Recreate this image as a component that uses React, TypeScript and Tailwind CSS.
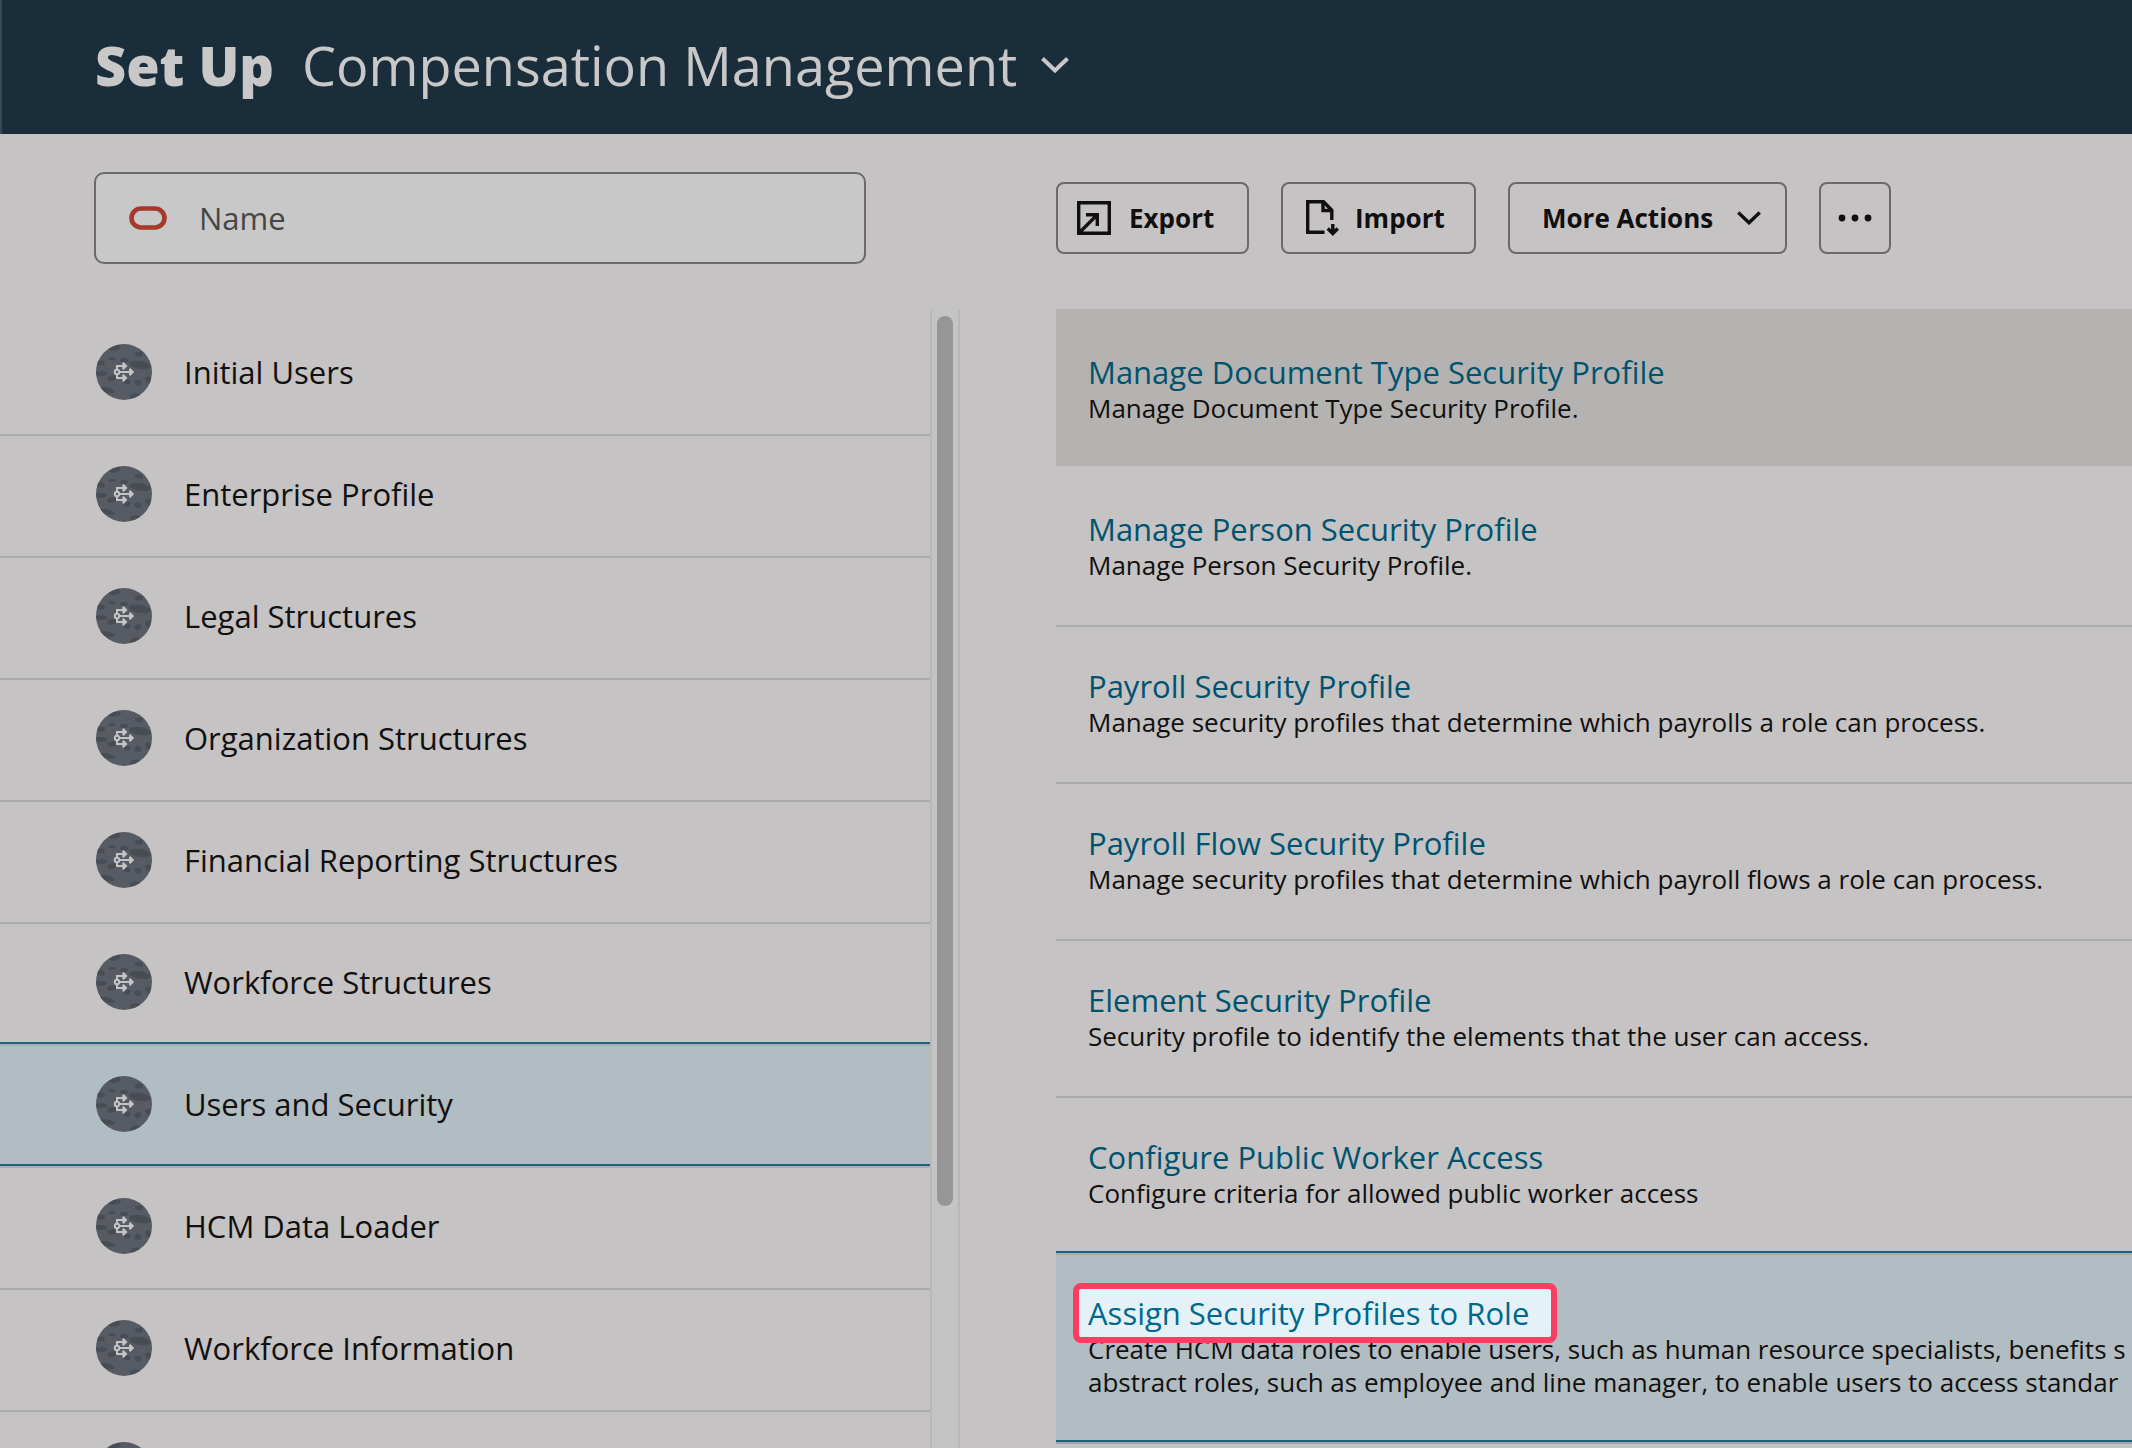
import type { ReactNode } from "react";

const categories = [
  "Initial Users",
  "Enterprise Profile",
  "Legal Structures",
  "Organization Structures",
  "Financial Reporting Structures",
  "Workforce Structures",
  "Users and Security",
  "HCM Data Loader",
  "Workforce Information",
  "",
];

type Task = {
  title: string;
  lines: string[];
  state?: "hovered" | "selected";
};

const tasks: Task[] = [
  {
    title: "Manage Document Type Security Profile",
    lines: ["Manage Document Type Security Profile."],
    state: "hovered",
  },
  {
    title: "Manage Person Security Profile",
    lines: ["Manage Person Security Profile."],
  },
  {
    title: "Payroll Security Profile",
    lines: ["Manage security profiles that determine which payrolls a role can process."],
  },
  {
    title: "Payroll Flow Security Profile",
    lines: ["Manage security profiles that determine which payroll flows a role can process."],
  },
  {
    title: "Element Security Profile",
    lines: ["Security profile to identify the elements that the user can access."],
  },
  {
    title: "Configure Public Worker Access",
    lines: ["Configure criteria for allowed public worker access"],
  },
  {
    title: "Assign Security Profiles to Role",
    lines: [
      "Create HCM data roles to enable users, such as human resource specialists, benefits s",
      "abstract roles, such as employee and line manager, to enable users to access standar",
    ],
    state: "selected",
  },
];

function Avatar() {
  return (
    <svg viewBox="0 0 56 56" className="size-14 shrink-0 overflow-hidden rounded-full bg-[#565b64]" aria-hidden="true">
      <g fill="#484c53">
        <ellipse cx="19" cy="4" rx="6" ry="2.5" transform="rotate(-10 19 4)" />
        <ellipse cx="43" cy="10" rx="4" ry="2.5" />
        <ellipse cx="16" cy="14.500" rx="3.500" ry="1.500" />
        <ellipse cx="28" cy="16" rx="4" ry="2" />
        <ellipse cx="4" cy="19" rx="5" ry="2.500" />
        <ellipse cx="44" cy="21" rx="11" ry="4" transform="rotate(8 44 21)" />
        <ellipse cx="5" cy="29.500" rx="6" ry="2.500" />
        <ellipse cx="16" cy="34" rx="5" ry="2.500" transform="rotate(-12 16 34)" />
        <ellipse cx="31" cy="38" rx="3.500" ry="2.500" />
        <ellipse cx="42" cy="39" rx="3.500" ry="3" />
        <ellipse cx="53" cy="36" rx="4" ry="3" transform="rotate(35 53 36)" />
        <ellipse cx="11" cy="46" rx="8" ry="2.500" transform="rotate(12 11 46)" />
        <ellipse cx="39" cy="52" rx="5" ry="2.500" transform="rotate(-15 39 52)" />
      </g>
      <g fill="none" stroke="#c4c4c4" strokeWidth="2">
        <circle cx="21" cy="28" r="2.200" />
        <path d="M21 25.500V22h8M21 30.500V34h8M23.500 28H36" />
      </g>
      <path
        d="M27.500 18l4 4-4 4-1.200-1.200V19.200zM27.500 30l4 4-4 4-1.200-1.200V31.200zM34.200 24l4 4-4 4-1.200-1.200v-5.600z"
        fill="#c4c4c4"
      />
    </svg>
  );
}

function Chevron({ className }: { className: string }) {
  return (
    <svg viewBox="0 0 28 16" className={className} fill="none" stroke="currentColor" aria-hidden="true">
      <path d="M1.500 1.500L14 13.500l12.500-12" strokeWidth="4" />
    </svg>
  );
}

function ExportIcon() {
  return (
    <svg viewBox="0 0 34 34" className="size-[34px] shrink-0" fill="none" stroke="currentColor" strokeWidth="3.400" aria-hidden="true">
      <path d="M1.700 1.700h30.600v30.600H1.700zM2.500 31.500L20 14M9 13.700h11.300V25" />
    </svg>
  );
}

function ImportIcon() {
  return (
    <svg viewBox="0 0 34 36" className="h-9 w-[34px] shrink-0" fill="none" stroke="currentColor" strokeWidth="3.400" aria-hidden="true">
      <path d="M18.500 32.300H1.700V1.700h15.800l8.300 8.500V20" />
      <path d="M17 2v8.500h8.500" />
      <path d="M26.800 24v9M21.800 28.500l5 5 5-5" />
    </svg>
  );
}

function ToolButton({ className, children, label }: { className: string; children: ReactNode; label?: string }) {
  return (
    <button
      type="button"
      aria-label={label}
      className={`flex h-[72px] items-center rounded-lg border-2 border-[#6b696a] text-[26px] font-bold ${className}`}
    >
      {children}
    </button>
  );
}

function CategoryRow({ name, selected }: { name: string; selected: boolean }) {
  return (
    <li className={`relative h-[122px] border-b-2 border-[#adacad] ${selected ? "bg-[#b1bdc2]" : ""}`}>
      {selected && <span className="absolute inset-x-0 -top-1 h-0.5 bg-[#1c637f]" />}
      {selected && <span className="absolute inset-x-0 bottom-0 h-0.5 bg-[#1c637f]" />}
      <button type="button" aria-label={name || "More"} className="flex h-full w-full items-center gap-8 pb-1 pl-24 text-left text-[31px]">
        <Avatar />
        {name}
      </button>
    </li>
  );
}

function TaskRow({ task }: { task: Task }) {
  const hovered = task.state === "hovered";
  const selected = task.state === "selected";
  return (
    <li
      className={
        hovered
          ? "mb-1 bg-[#b4b3b1] px-8 pt-[43px] pb-[41px]"
          : selected
            ? "relative border-b-2 border-[#a3a7a9] bg-[#b1bdc2] px-8 pt-[38px] pb-[43px]"
            : "border-b-2 border-[#adacad] px-8 pt-[39px] pb-[43px]"
      }
    >
      {selected && <span className="absolute inset-x-0 -top-1 h-0.5 bg-[#1c637f]" />}
      {selected && <span className="absolute inset-x-0 bottom-0 h-0.5 bg-[#1c637f]" />}
      {selected ? (
        <a href="#assign" className="relative z-10 block w-fit text-[31px] leading-10 text-[#00688c]">
          <span className="absolute -top-2.5 -right-7 -bottom-2.5 -left-[15px] rounded-lg border-6 border-[#fb3d62] bg-[#e4f1f7]" />
          <span className="relative">{task.title}</span>
        </a>
      ) : (
        <a href="#task" className="block w-fit text-[31px] leading-10 text-[#00536f]">
          {task.title}
        </a>
      )}
      {task.lines.map((line) => (
        <p key={line} className="text-[26px] leading-[33px] whitespace-nowrap">
          {line}
        </p>
      ))}
    </li>
  );
}

export default function App() {
  return (
    <div className="flex h-screen flex-col overflow-hidden bg-[#c5c3c4] font-['Open_Sans','Noto_Sans',sans-serif] text-[#11100f]">
      <header className="flex h-[134px] shrink-0 items-center border-l-2 border-[#354957] bg-[#192d3a] pb-1 pl-[93px] text-[54px] text-[#c8c8c8]">
        <h1 className="flex items-center gap-7">
          <span className="font-extrabold">Set Up</span>
          <button type="button" className="flex items-center gap-6">
            Compensation Management
            <Chevron className="h-4 w-7" />
          </button>
        </h1>
      </header>

      <div className="flex min-h-0 grow">
        <aside className="flex w-[960px] shrink-0 flex-col">
          <label className="mt-[38px] ml-[94px] flex h-[92px] w-[772px] shrink-0 items-center gap-8 rounded-[10px] border-2 border-[#6b696a] bg-[#c8c8c8] pl-[33px]">
            <svg viewBox="0 0 38 24" className="h-6 w-[38px] shrink-0" aria-hidden="true">
              <rect x="2.500" y="2.500" width="33" height="19" rx="9.500" fill="none" stroke="#a5392c" strokeWidth="4.600" />
            </svg>
            <input
              type="text"
              aria-label="Name"
              placeholder="Name"
              className="min-w-0 grow bg-transparent text-[31px] outline-none placeholder:text-[#474645]"
            />
          </label>

          <div className="mt-[46px] flex min-h-0 grow">
            <ul className="grow overflow-hidden pt-1">
              {categories.map((name) => (
                <CategoryRow key={name} name={name} selected={name === "Users and Security"} />
              ))}
            </ul>
            <div className="w-[30px] shrink-0 border-x-2 border-[#b9b8b9] bg-[#c4c4c4] px-[5px] pt-1.5">
              <div className="h-[890px] max-h-full rounded-full bg-[#969696]" />
            </div>
          </div>
        </aside>

        <main className="ml-24 min-w-0 grow overflow-hidden">
          <div className="mt-12 flex gap-8">
            <ToolButton className="w-[193px] gap-[18px] pl-[19px]">
              <ExportIcon />
              Export
            </ToolButton>
            <ToolButton className="w-[195px] gap-[15px] pl-[23px]">
              <ImportIcon />
              Import
            </ToolButton>
            <ToolButton className="w-[279px] justify-between pr-6 pl-8">
              More Actions
              <Chevron className="h-[14px] w-6" />
            </ToolButton>
            <ToolButton className="w-[72px] justify-center" label="More options">
              <svg viewBox="0 0 34 8" className="h-2 w-[34px]" fill="currentColor" aria-hidden="true">
                <circle cx="4" cy="4" r="3.400" />
                <circle cx="17" cy="4" r="3.400" />
                <circle cx="30" cy="4" r="3.400" />
              </svg>
            </ToolButton>
          </div>
          <ul className="mt-[55px]">
            {tasks.map((task) => (
              <TaskRow key={task.title} task={task} />
            ))}
          </ul>
        </main>
      </div>
    </div>
  );
}
